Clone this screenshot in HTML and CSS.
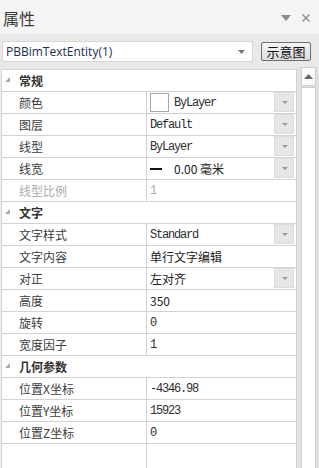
FILE: index.html
```html
<!doctype html>
<html>
	<head>
		<meta charset="utf-8">
		<link rel="stylesheet" href="styles.css">
	</head>
	<body>
		<div class="panel">
			<div class="titlebar">
				<span class="title">属性</span>
				<span class="tools">
					<svg width="10" height="6" viewBox="0 0 10 6"><path d="M0 0H10L5 6Z" fill="#8a8a8a"/></svg>
					<svg width="8" height="8" viewBox="0 0 8 8"><path d="M0.5 0.5L7.5 7.5M7.5 0.5L0.5 7.5" stroke="#8a8a8a" stroke-width="1.4"/></svg>
				</span>
			</div>
			<div class="toolbar">
				<div class="combo">
					<span>PBBimTextEntity(1)</span>
					<svg width="7" height="4" viewBox="0 0 7 4"><path d="M0 0H7L3.5 4Z" fill="#777"/></svg>
				</div>
				<button class="btn">示意图</button>
			</div>
			<div class="body">
				<div class="grid">
					<div class="cat"><i class="tri"></i>常规</div>
					<div class="row"><div class="name">颜色</div><div class="val"><span class="swatch"></span><span class="mono">ByLayer</span><span class="dd"></span></div></div>
					<div class="row"><div class="name">图层</div><div class="val"><span class="mono">Default</span><span class="dd"></span></div></div>
					<div class="row"><div class="name">线型</div><div class="val"><span class="mono">ByLayer</span><span class="dd"></span></div></div>
					<div class="row"><div class="name">线宽</div><div class="val"><span class="lw"></span><span class="sans">0.00 毫米</span><span class="dd"></span></div></div>
					<div class="row off"><div class="name">线型比例</div><div class="val"><span class="mono">1</span></div></div>
					<div class="cat"><i class="tri"></i>文字</div>
					<div class="row"><div class="name">文字样式</div><div class="val"><span class="mono">Standard</span><span class="dd"></span></div></div>
					<div class="row"><div class="name">文字内容</div><div class="val"><span class="sans">单行文字编辑</span></div></div>
					<div class="row"><div class="name">对正</div><div class="val"><span class="sans">左对齐</span><span class="dd"></span></div></div>
					<div class="row"><div class="name">高度</div><div class="val"><span class="sans">350</span></div></div>
					<div class="row"><div class="name">旋转</div><div class="val"><span class="mono">0</span></div></div>
					<div class="row"><div class="name">宽度因子</div><div class="val"><span class="mono">1</span></div></div>
					<div class="cat"><i class="tri"></i>几何参数</div>
					<div class="row"><div class="name">位置X坐标</div><div class="val"><span class="mono">-4346.98</span></div></div>
					<div class="row"><div class="name">位置Y坐标</div><div class="val"><span class="mono">15923</span></div></div>
					<div class="row"><div class="name">位置Z坐标</div><div class="val"><span class="mono">0</span></div></div>
					<div class="fill"><div class="fill-name"></div></div>
				</div>
				<div class="scroll">
					<div class="up"><svg width="9" height="5" viewBox="0 0 9 5"><path d="M0 5H9L4.5 0Z" fill="#666"/></svg></div>
					<div class="thumb"></div>
				</div>
			</div>
		</div>
	</body>
</html>
```

FILE: styles.css
```css
* {
	margin: 0;
	padding: 0;
	box-sizing: border-box;
}
body {
	background: #f0f0f0;
	font-family: "Noto Sans CJK SC", "Liberation Sans", sans-serif;
	font-size: 12px;
	color: #333;
}
.panel {
	height: 468px;
	display: flex;
	flex-direction: column;
	overflow: hidden;
}
.titlebar {
	height: 34px;
	display: flex;
	align-items: center;
	justify-content: space-between;
	padding: 0 9px 0 3px;
	background: #f4f4f4;
}
.title {
	font-size: 16px;
	color: #3a3a3a;
	line-height: 1;
	margin-top: 1px;
}
.tools {
	display: flex;
	align-items: center;
	gap: 11px;
	margin-top: 2px;
}
.toolbar {
	height: 35px;
	display: flex;
	align-items: flex-start;
	padding: 7px 0 0 2px;
	gap: 8px;
	background: #e9e9e9;
}
.combo {
	width: 251px;
	height: 21px;
	background: #fff;
	border: 1px solid #d6d6d6;
	display: flex;
	align-items: center;
	justify-content: space-between;
	padding: 0 7px 0 3px;
	font-family: "Open Sans", "Liberation Sans", sans-serif;
	font-size: 12px;
	color: #1e2d52;
}
.btn {
	width: 50px;
	height: 19px;
	margin-top: 1px;
	border: 1px solid #6e6e6e;
	border-radius: 2px;
	background: linear-gradient(#f4f4f4, #dcdcdc);
	font-family: "Noto Sans CJK SC", sans-serif;
	font-size: 13px;
	line-height: 15px;
	color: #111;
}
.body {
	flex: 1;
	display: flex;
	padding-left: 1px;
	min-height: 0;
}
.grid {
	width: 296px;
	background: #fff;
	border: 1px solid #d2d2d2;
	border-bottom: none;
	display: flex;
	flex-direction: column;
}
.cat, .row {
	height: 22px;
	border-bottom: 1px solid #d2d2d2;
	display: flex;
	align-items: center;
	flex-shrink: 0;
}
.cat {
	font-weight: bold;
	color: #333;
	padding-left: 17px;
	position: relative;
}
.tri {
	position: absolute;
	left: 3px;
	top: 7px;
	width: 0;
	height: 0;
	border-left: 5px solid transparent;
	border-bottom: 5px solid #a8a8a8;
}
.name {
	width: 145px;
	height: 100%;
	border-right: 1px solid #d2d2d2;
	padding-left: 17px;
	display: flex;
	align-items: center;
	color: #3c3c3c;
}
.val {
	flex: 1;
	height: 100%;
	display: flex;
	align-items: center;
	padding: 0 2px 0 3px;
	color: #222;
}
.off .name, .off .val {
	color: #aaa;
}
.mono {
	font-family: "Liberation Mono", monospace;
	font-size: 12px;
	letter-spacing: -1.2px;
	color: #2e2e2e;
}
.off .mono {
	color: #aaa;
}
.sans {
	font-family: "Noto Sans CJK SC", sans-serif;
	font-size: 12px;
}
.swatch {
	width: 19px;
	height: 19px;
	border: 1px solid #a8a8a8;
	background: #fff;
	margin-right: 5px;
}
.lw {
	width: 12px;
	height: 2px;
	background: #111;
	margin: 0 12px 0 0;
}
.dd {
	margin-left: auto;
	align-self: flex-start;
	width: 20px;
	height: 20px;
	background: #e6e6e6;
	border: 1px solid #dcdcdc;
	position: relative;
}
.dd::after {
	content: "";
	position: absolute;
	left: 7px;
	top: 8px;
	border-left: 3px solid transparent;
	border-right: 3px solid transparent;
	border-top: 3px solid #999;
}
.fill {
	flex: 1;
}
.fill-name {
	width: 145px;
	height: 100%;
	border-right: 1px solid #d2d2d2;
}
.scroll {
	width: 22px;
	margin-top: -2px;
	background: #e2e2e2;
	padding: 0 3px 0 4px;
	display: flex;
	flex-direction: column;
}
.up {
	height: 19px;
	background: #fafafa;
	border: 1px solid #cfcfcf;
	display: flex;
	align-items: center;
	justify-content: center;
}
.thumb {
	flex: 1;
	margin-top: 1px;
	background: #fff;
	border: 1px solid #cfcfcf;
	border-bottom: none;
}
```
